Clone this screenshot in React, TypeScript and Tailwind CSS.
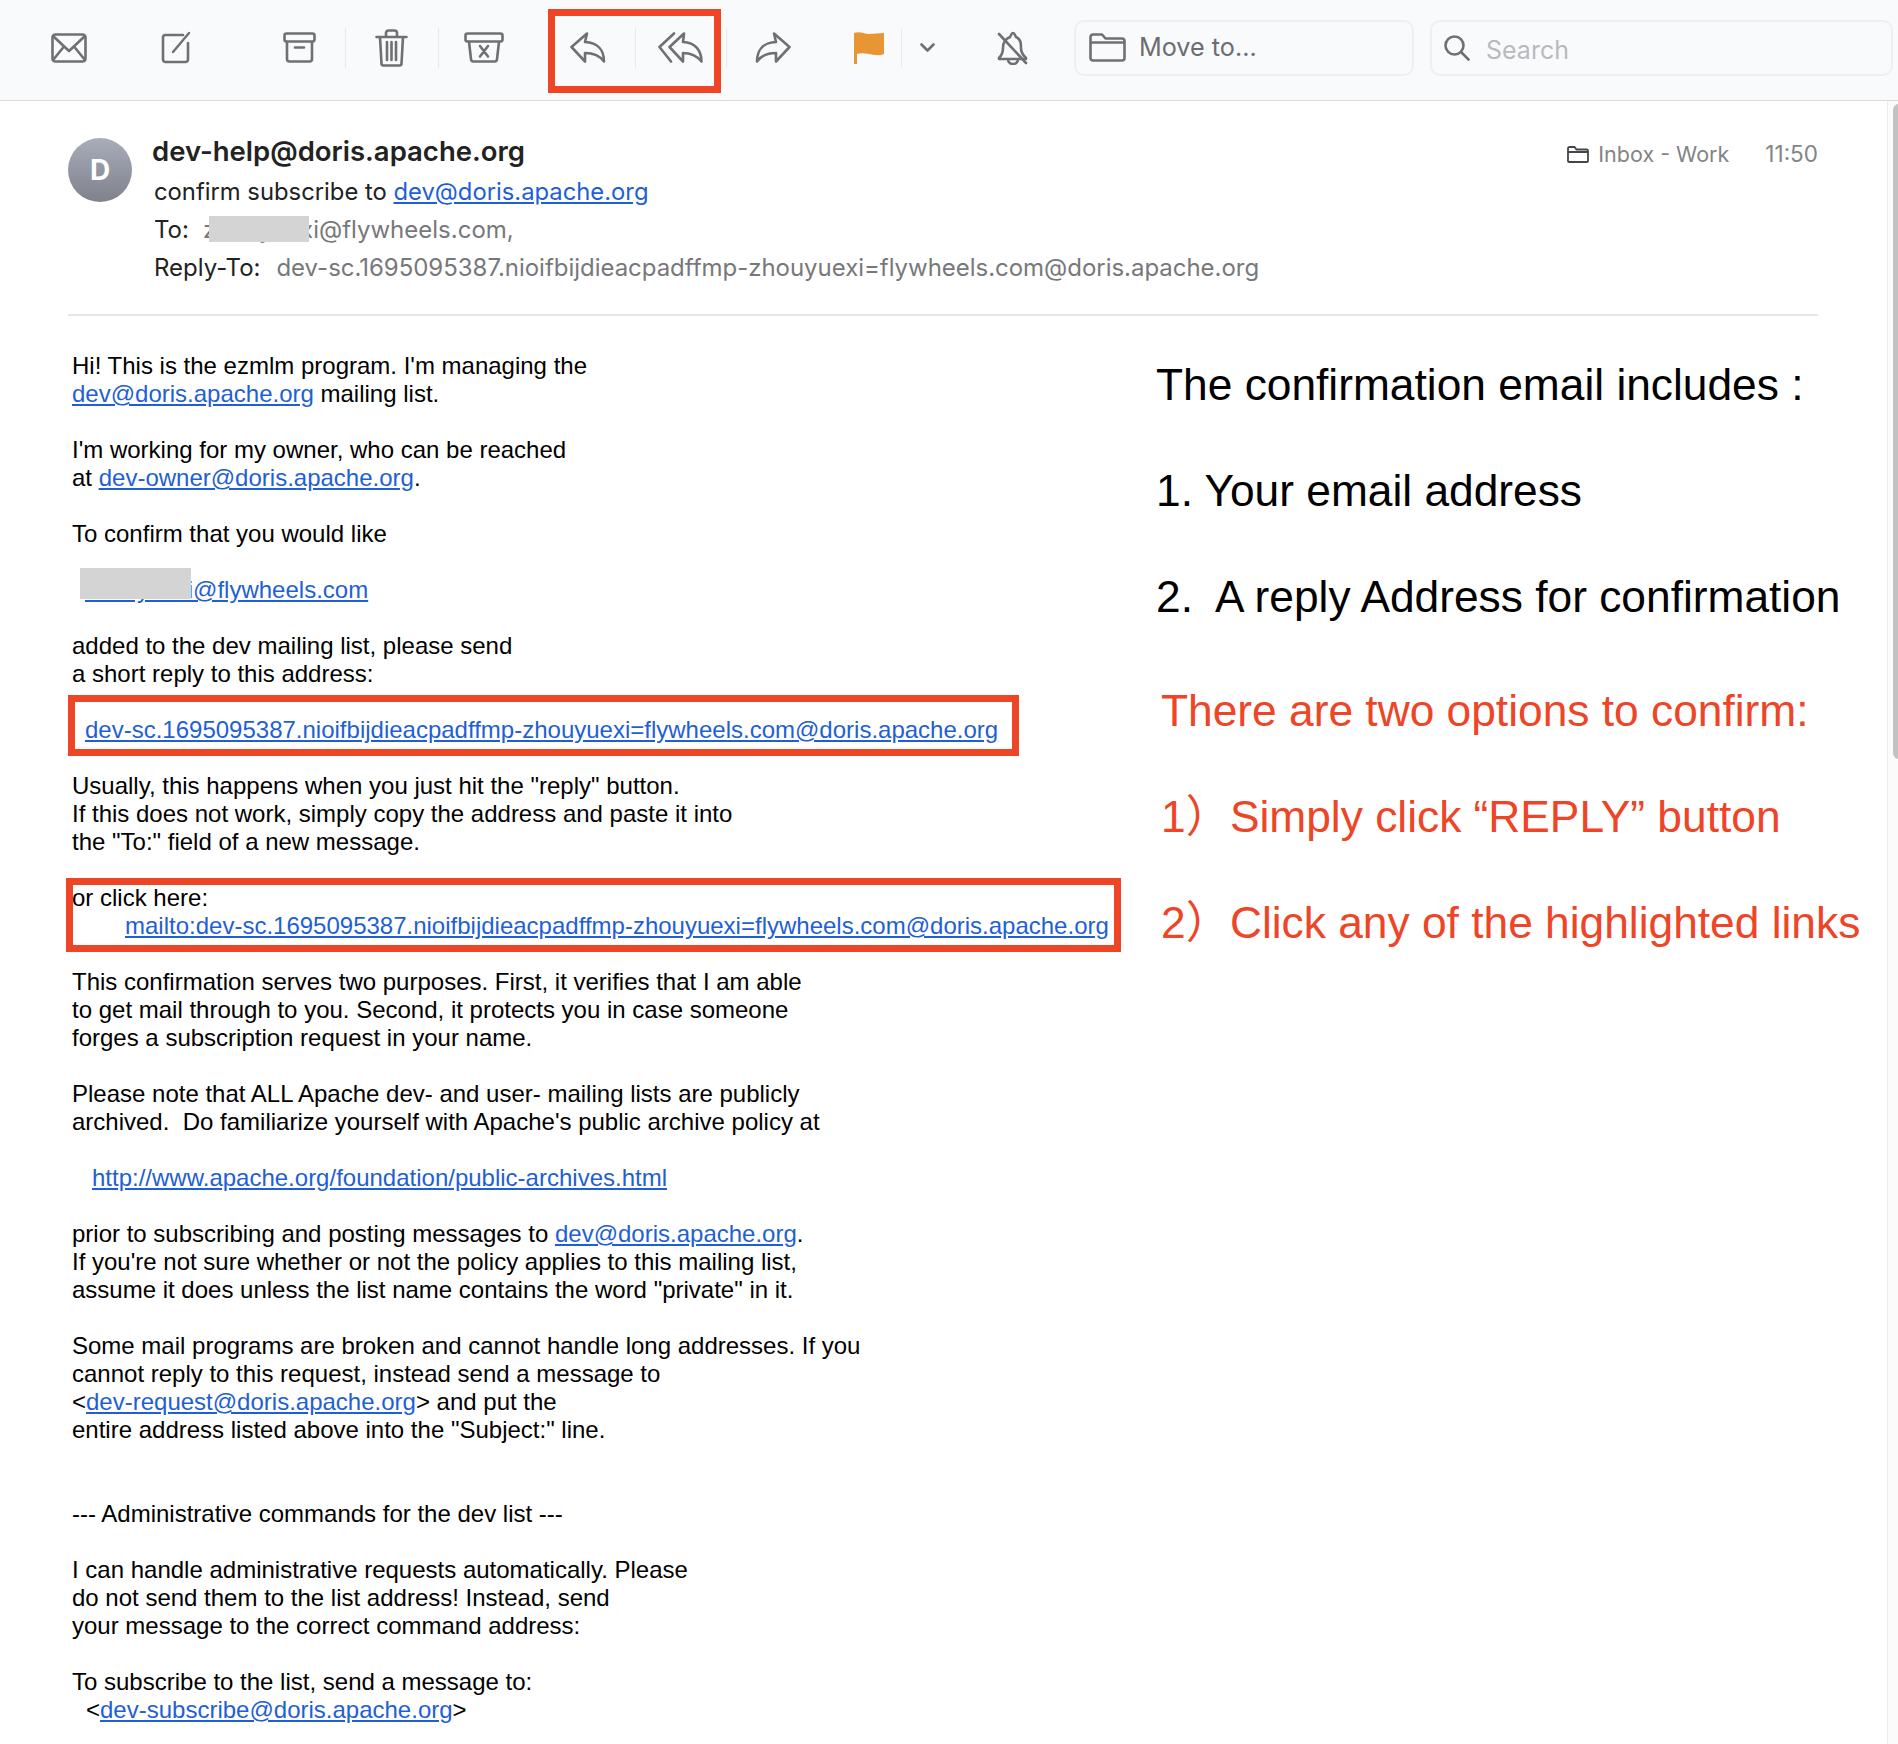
import React from 'react';

type Line = React.ReactNode;

function A({ children }: { children: React.ReactNode }) {
  return <span className="text-[#1f5fd6] underline">{children}</span>;
}

function Sep() {
  return <div className="w-px h-[40px] bg-[#e8e9ec]" />;
}

function Ico({ w, h, box, className, children }: { w: number; h: number; box: string; className?: string; children: React.ReactNode }) {
  return (
    <svg width={w} height={h} viewBox={box} fill="none" stroke="#6f7073" strokeWidth="2.6" strokeLinejoin="round" strokeLinecap="round" className={className}>
      {children}
    </svg>
  );
}

function Toolbar() {
  return (
    <div className="h-[101px] pb-[5px] bg-[#f9fafc] border-b border-[#d9dadd] flex items-center relative shrink-0">
      <div className="ml-[51px]">
        <Ico w={36} h={30} box="0 0 36 30">
          <rect x="1.5" y="1.5" width="33" height="27" rx="3" />
          <path d="M2 3l16 15L34 3M2 27l11-13.500M34 27L23 13.500" />
        </Ico>
      </div>
      <div className="ml-[74px]">
        <Ico w={31} h={33} box="0 0 31 33">
          <path d="M22 4H4.500A2.500 2.500 0 0 0 2 6.500v22A2.500 2.500 0 0 0 4.500 31h20a2.500 2.500 0 0 0 2.500-2.500V12" />
          <path d="M12 21L28 2" strokeWidth="2.400" />
        </Ico>
      </div>
      <div className="ml-[91px]">
        <Ico w={33} h={31} box="0 0 33 31">
          <rect x="1.500" y="1.500" width="30" height="8" rx="2" />
          <path d="M4 10v17a2.500 2.500 0 0 0 2.500 2.500h20A2.500 2.500 0 0 0 29 27V10M12 15.500h9" />
        </Ico>
      </div>
      <div className="ml-[29px]"><Sep /></div>
      <div className="ml-[29px]">
        <Ico w={33} h={38} box="0 0 33 38">
          <path d="M1.500 8h30M11 8V4a2.500 2.500 0 0 1 2.500-2.500h6A2.500 2.500 0 0 1 22 4v4M5 8l1.500 26.500A2 2 0 0 0 8.500 36.500h16a2 2 0 0 0 2-2L28 8M12 13v18M16.500 13v18M21 13v18" />
        </Ico>
      </div>
      <div className="ml-[30px]"><Sep /></div>
      <div className="ml-[25px]">
        <Ico w={40} h={31} box="0 0 40 31">
          <rect x="1.500" y="1.500" width="37" height="8" rx="2" />
          <path d="M5 10l2 17a2.500 2.500 0 0 0 2.500 2.500h21A2.500 2.500 0 0 0 33 27l2-17M16 14l8 10.500M24 14l-8 10.500" />
        </Ico>
      </div>
      <div className="ml-[66px]">
        <Ico w={36} h={31} box="0 0 36 31">
          <path d="M17 1.500L1.500 15 15 29.500V21c10 0 15 3 19 8.500 0-11-6-19-19-19.500z" />
        </Ico>
      </div>
      <div className="ml-[29px]"><Sep /></div>
      <div className="ml-[22px]">
        <Ico w={46} h={31} box="0 0 46 31">
          <path d="M16 1.500L1.500 15 13 29.500" />
          <path d="M26 1.500L11.500 15 25 29.500V21c9 0 14 3 18.500 8.500 0-11-6-19-18.500-19.500z" />
        </Ico>
      </div>
      <div className="ml-[22px]"><Sep /></div>
      <div className="ml-[28px]">
        <Ico w={36} h={31} box="0 0 36 31">
          <path d="M19 1.500L34.500 15 21 29.500V21c-10 0-15 3-19 8.500 0-11 6-19 19-19.500z" />
        </Ico>
      </div>
      <div className="ml-[63px]">
        <svg width="30" height="33" viewBox="0 0 30 33">
          <path d="M0 2c6-2 10 1 15 1s10-1 15-1v21c-5 2-10 1-15 0s-9-1-12 0v10H0z" fill="#e89536" />
        </svg>
      </div>
      <div className="ml-[17px]"><Sep /></div>
      <div className="ml-[18px]">
        <Ico w={15} h={9} box="0 0 15 9">
          <path d="M1.500 1.500L7.500 7.500 13.500 1.500" />
        </Ico>
      </div>
      <div className="ml-[61px]">
        <Ico w={33} h={34} box="0 0 33 34">
          <path d="M14 6c1-1 1-4 3-4s2 3 3 4c5 2 5 7 5 11 0 6 3 8 5 10v1H3v-1c2-2 4-4 4-10 0-4 2-9 7-11zM12 28c0 3 2 5 5 5s5-2 5-5" />
          <path d="M3 3l27 29" />
        </Ico>
      </div>
      <div className="ml-[45px] w-[340px] h-[56px] rounded-[10px] border-2 border-[#eeeff1] flex items-center pl-[13px]">
        <Ico w={37} h={29} box="0 0 37 29">
          <path d="M1.500 25V4a2.500 2.500 0 0 1 2.500-2.500h9l3.500 4H33A2.500 2.500 0 0 1 35.500 8v17a2.500 2.500 0 0 1-2.500 2.500H4A2.500 2.500 0 0 1 1.500 25zM1.500 9.500h34" />
        </Ico>
        <span className="ml-[13px] text-[25.2px] text-[#6c6d70] font-['Inter',sans-serif]">Move to...</span>
      </div>
      <div className="ml-[16px] w-[463px] h-[56px] rounded-[10px] border-2 border-[#eeeff1] flex items-center pl-[12px]">
        <Ico w={26} h={26} box="0 0 26 26">
          <circle cx="10.500" cy="10.500" r="9" />
          <path d="M17 17l7.500 7.500" />
        </Ico>
        <span className="ml-[16px] mt-[6px] text-[25px] text-[#b9babd] font-['Inter',sans-serif]">Search</span>
      </div>
      {/* red mark round the reply buttons */}
      <div className="absolute left-[548px] top-[9px] w-[173px] h-[84px] border-[7px] border-[#ee4527]" />
    </div>
  );
}

function MailHeader() {
  return (
    <div className="ml-[68px] mr-[80px] h-[215px] border-b-2 border-[#e6e6e6] flex font-['Inter',sans-serif] shrink-0">
      <div className="mt-[37px] w-[64px] h-[64px] rounded-full bg-gradient-to-b from-[#a9adb9] to-[#7f828d] flex items-center justify-center text-white font-bold text-[28px]">D</div>
      <div className="ml-[22px] mt-[32px] flex-1">
        <div className="flex justify-between h-[38px] items-center">
          <div className="text-[27.5px] font-semibold text-[#222222] ml-[-2px]">dev-help@doris.apache.org</div>
          <div className="flex items-center text-[#838486] mt-[4px]">
            <svg width="22" height="17" viewBox="0 0 22 17" fill="none" stroke="#444548" strokeWidth="1.800">
              <path d="M1 15V2.500A1.500 1.500 0 0 1 2.500 1h5l2 2.500h10A1.500 1.500 0 0 1 21 5v10a1 1 0 0 1-1 1H2a1 1 0 0 1-1-1zM1 6h20" />
            </svg>
            <span className="ml-[9px] text-[21.5px]">Inbox - Work</span>
            <span className="ml-[36px] text-[22.5px]">11:50</span>
          </div>
        </div>
        <div className="h-[39px] mt-[1px] flex items-center text-[23.8px] text-[#222222]">
          confirm subscribe to&nbsp;<A>dev@doris.apache.org</A>
        </div>
        <div className="h-[38px] flex items-center text-[24px] text-[#222222] relative">
          <span>To:</span>
          <span className="ml-[14px] text-[#77787b]">zhouyuexi@flywheels.com,</span>
          <div className="absolute left-[55px] top-[5px] w-[100px] h-[26px] bg-[#d4d4d4]" />
        </div>
        <div className="h-[38px] flex items-center text-[24px] text-[#222222]">
          <span>Reply-To:</span>
          <span className="ml-[16px] text-[#77787b] tracking-[-0.03px]">dev-sc.1695095387.nioifbijdieacpadffmp-zhouyuexi=flywheels.com@doris.apache.org</span>
        </div>
      </div>
    </div>
  );
}

const lines: Line[] = [
  "Hi! This is the ezmlm program. I'm managing the",
  <><A>dev@doris.apache.org</A> mailing list.</>,
  '',
  "I'm working for my owner, who can be reached",
  <>at <A>dev-owner@doris.apache.org</A>.</>,
  '',
  'To confirm that you would like',
  '',
  <div className="pl-[13px]"><A>zhouyuexi@flywheels.com</A></div>,
  '',
  'added to the dev mailing list, please send',
  'a short reply to this address:',
  '',
  <div className="pl-[13px]"><A>dev-sc.1695095387.nioifbijdieacpadffmp-zhouyuexi=flywheels.com@doris.apache.org</A></div>,
  '',
  'Usually, this happens when you just hit the "reply" button.',
  'If this does not work, simply copy the address and paste it into',
  'the "To:" field of a new message.',
  '',
  'or click here:',
  <div className="pl-[53px]"><A>mailto:dev-sc.1695095387.nioifbijdieacpadffmp-zhouyuexi=flywheels.com@doris.apache.org</A></div>,
  '',
  'This confirmation serves two purposes. First, it verifies that I am able',
  'to get mail through to you. Second, it protects you in case someone',
  'forges a subscription request in your name.',
  '',
  'Please note that ALL Apache dev- and user- mailing lists are publicly',
  "archived.  Do familiarize yourself with Apache's public archive policy at",
  '',
  <div className="pl-[20px]"><A>http://www.apache.org/foundation/public-archives.html</A></div>,
  '',
  <>prior to subscribing and posting messages to <A>dev@doris.apache.org</A>.</>,
  "If you're not sure whether or not the policy applies to this mailing list,",
  'assume it does unless the list name contains the word "private" in it.',
  '',
  'Some mail programs are broken and cannot handle long addresses. If you',
  'cannot reply to this request, instead send a message to',
  <>&lt;<A>dev-request@doris.apache.org</A>&gt; and put the</>,
  'entire address listed above into the "Subject:" line.',
  '',
  '',
  '--- Administrative commands for the dev list ---',
  '',
  'I can handle administrative requests automatically. Please',
  'do not send them to the list address! Instead, send',
  'your message to the correct command address:',
  '',
  'To subscribe to the list, send a message to:',
  <div className="pl-[14px]">&lt;<A>dev-subscribe@doris.apache.org</A>&gt;</div>,
];

function MailBody() {
  return (
    <div className="ml-[72px] w-[1050px] text-[24px] leading-[28px] text-black whitespace-pre">
      {lines.map((line, i) => (
        <div key={i} className="h-[28px]">{line}</div>
      ))}
    </div>
  );
}

function Notes() {
  return (
    <div className="ml-[34px] -mt-[20px] text-[44.3px] leading-[106px] font-['Liberation_Sans','Noto_Sans_CJK_SC',sans-serif]">
      <div className="text-black">
        <div className="h-[106px]">The confirmation email includes :</div>
        <div className="h-[106px]">1. Your email address</div>
        <div className="h-[106px] whitespace-pre">2.  A reply Address for confirmation</div>
      </div>
      <div className="ml-[5px] mt-[8px] text-[#ee4527]">
        <div className="h-[106px]">There are two options to confirm:</div>
        <div className="h-[106px] whitespace-pre">1）Simply click “REPLY” button</div>
        <div className="h-[106px] whitespace-pre">2）Click any of the highlighted links</div>
      </div>
    </div>
  );
}

export default function App() {
  return (
    <div className="w-[1898px] h-[1744px] bg-white overflow-hidden flex flex-col relative font-['Liberation_Sans',Arial,sans-serif]">
      <Toolbar />
      <MailHeader />
      <div className="flex mt-[36px]">
        <MailBody />
        <Notes />
      </div>
      {/* red marks and blanked-out parts laid over the mail */}
      <div className="absolute left-[68px] top-[695px] w-[951px] h-[61px] border-[7px] border-[#ee4527]" />
      <div className="absolute left-[66px] top-[878px] w-[1055px] h-[74px] border-[7px] border-[#ee4527]" />
      <div className="absolute left-[80px] top-[568px] w-[111px] h-[31px] bg-[#d4d4d4]" />
      {/* scrollbar */}
      <div className="absolute left-[1887px] top-[101px] bottom-0 w-[11px] bg-[#fbfbfb] border-l border-[#ececec]">
        <div className="ml-[5px] mt-[3px] w-[6px] h-[655px] rounded-l-full bg-[#c2c2c2]" />
      </div>
    </div>
  );
}
